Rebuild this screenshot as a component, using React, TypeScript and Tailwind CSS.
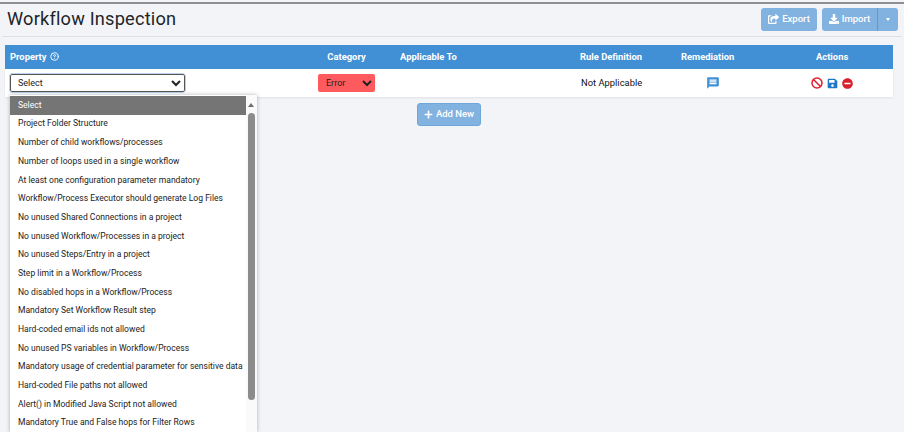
import { FaDownload, FaMinusCircle, FaPlus, FaSave, FaShareSquare } from "react-icons/fa";
import { MdMessage } from "react-icons/md";
import { Ban, CircleHelp } from "lucide-react";

const options = [
  "Project Folder Structure",
  "Number of child workflows/processes",
  "Number of loops used in a single workflow",
  "At least one configuration parameter mandatory",
  "Workflow/Process Executor should generate Log Files",
  "No unused Shared Connections in a project",
  "No unused Workflow/Processes in a project",
  "No unused Steps/Entry in a project",
  "Step limit in a Workflow/Process",
  "No disabled hops in a Workflow/Process",
  "Mandatory Set Workflow Result step",
  "Hard-coded email ids not allowed",
  "No unused PS variables in Workflow/Process",
  "Mandatory usage of credential parameter for sensitive data",
  "Hard-coded File paths not allowed",
  "Alert() in Modified Java Script not allowed",
  "Mandatory True and False hops for Filter Rows",
];

const gridCols = "grid grid-cols-[308px_67px_180px_100px_95px_138px] items-center";

const App = () => {
  return (
    <div className="relative h-[432px] w-[904px] overflow-hidden bg-[#f3f4f8] font-['Roboto',sans-serif] text-[#222]">
      <div className="h-[4px] border-b-2 border-[#8f8f8f]" />

      {/* Title bar */}
      <div className="mx-[2px] flex h-[33px] items-center justify-between border-b border-[#dfe0e5] pr-[4px] pl-[5px]">
        <h1 className="mt-[-2px] text-[18.2px] leading-none font-normal tracking-[0.2px] text-[#212529]">Workflow Inspection</h1>
        <div className="mt-[-2px] flex gap-[5px]">
          <button className="flex h-[23px] w-[56px] items-center justify-center gap-[3px] rounded-[3px] bg-[#82b2e0] text-[9.5px] font-medium text-white">
            <FaShareSquare className="h-[10px] w-[11px]" />
            Export
          </button>
          <div className="flex h-[23px] w-[76px] rounded-[3px] bg-[#82b2e0] text-[9.5px] font-medium text-white">
            <button className="flex w-[56px] items-center justify-center gap-[3px] border-r border-[#5d9ad4]">
              <FaDownload className="h-[10px] w-[10px]" />
              Import
            </button>
            <button className="flex w-[20px] items-center justify-center">
              <span className="border-x-[2.5px] border-t-[3px] border-x-transparent border-t-white" />
            </button>
          </div>
        </div>
      </div>

      {/* Table */}
      <div className="mt-[8px] mr-[11px] ml-[5px]">
        <div className={`${gridCols} h-[24px] bg-[#418fd5] text-[9.4px] font-bold text-white`}>
          <div className="flex items-center gap-[3px] pl-[5px]">
            Property
            <CircleHelp className="h-[9px] w-[9px]" strokeWidth={2.5} />
          </div>
          <div className="text-center">Category</div>
          <div className="pl-[20px]">Applicable To</div>
          <div className="pl-[20px] whitespace-nowrap">Rule Definition</div>
          <div className="pl-[21px]">Remediation</div>
          <div className="pl-[61px]">Actions</div>
        </div>
        <div className={`${gridCols} h-[28px] bg-white shadow-[0_1px_2px_rgba(0,0,0,0.08)]`}>
          <div className="flex pl-[5px]">
            <select className="h-[18px] w-[175px] rounded-[2px] border border-[#555] bg-white pl-[3px] text-[9px] text-[#222] outline outline-[1px] outline-[#b9d3ee]">
              <option>Select</option>
            </select>
          </div>
          <div className="flex justify-center">
            <select className="h-[18px] w-[57px] rounded-[2px] bg-[#ff5b5f] pl-[4px] text-[9px] text-[#222]">
              <option>Error</option>
            </select>
          </div>
          <div />
          <div className="pl-[21px] text-[9.4px] whitespace-nowrap text-[#111]">Not Applicable</div>
          <div className="flex pl-[46px]">
            <MdMessage className="h-[14px] w-[14px] text-[#418fd5]" />
          </div>
          <div className="flex items-center gap-[4px] pl-[56px]">
            <Ban className="h-[12px] w-[12px] text-[#e0202c]" strokeWidth={3} />
            <FaSave className="h-[11px] w-[11px] text-[#1f78c8]" />
            <FaMinusCircle className="h-[11px] w-[11px] text-[#d9202c]" />
          </div>
        </div>
        <div className="mt-[6px] flex justify-center">
          <button className="flex h-[23px] w-[64px] items-center justify-center gap-[3px] rounded-[3px] border border-[#6fa7dc] bg-[#82b2e0] text-[9.5px] font-medium text-white">
            <FaPlus className="h-[9px] w-[9px]" />
            Add New
          </button>
        </div>
      </div>

      {/* Open dropdown list */}
      <div className="absolute top-[95px] left-[10px] h-[337px] w-[247px] overflow-hidden bg-white pt-[1px] text-[8.55px] text-[#222] shadow-[0_0_4px_rgba(0,0,0,0.3)]">
        <div className="flex h-[18.5px] w-[236px] items-center bg-[#757575] pl-[8px] text-white">Select</div>
        {options.map((option) => (
          <div key={option} className="flex h-[18.7px] items-center pl-[8px] whitespace-nowrap">
            {option}
          </div>
        ))}
        {/* Scrollbar */}
        <div className="absolute top-0 right-0 h-full w-[11px] bg-[#fafafa]">
          <span className="absolute top-[8px] left-[2px] border-x-[3.5px] border-b-[4px] border-x-transparent border-b-[#6e6e6e]" />
          <div className="absolute top-[18px] left-[2px] h-[287px] w-[7px] rounded-[4px] bg-[#8c8c8c]" />
        </div>
      </div>
    </div>
  );
};

export default App;
